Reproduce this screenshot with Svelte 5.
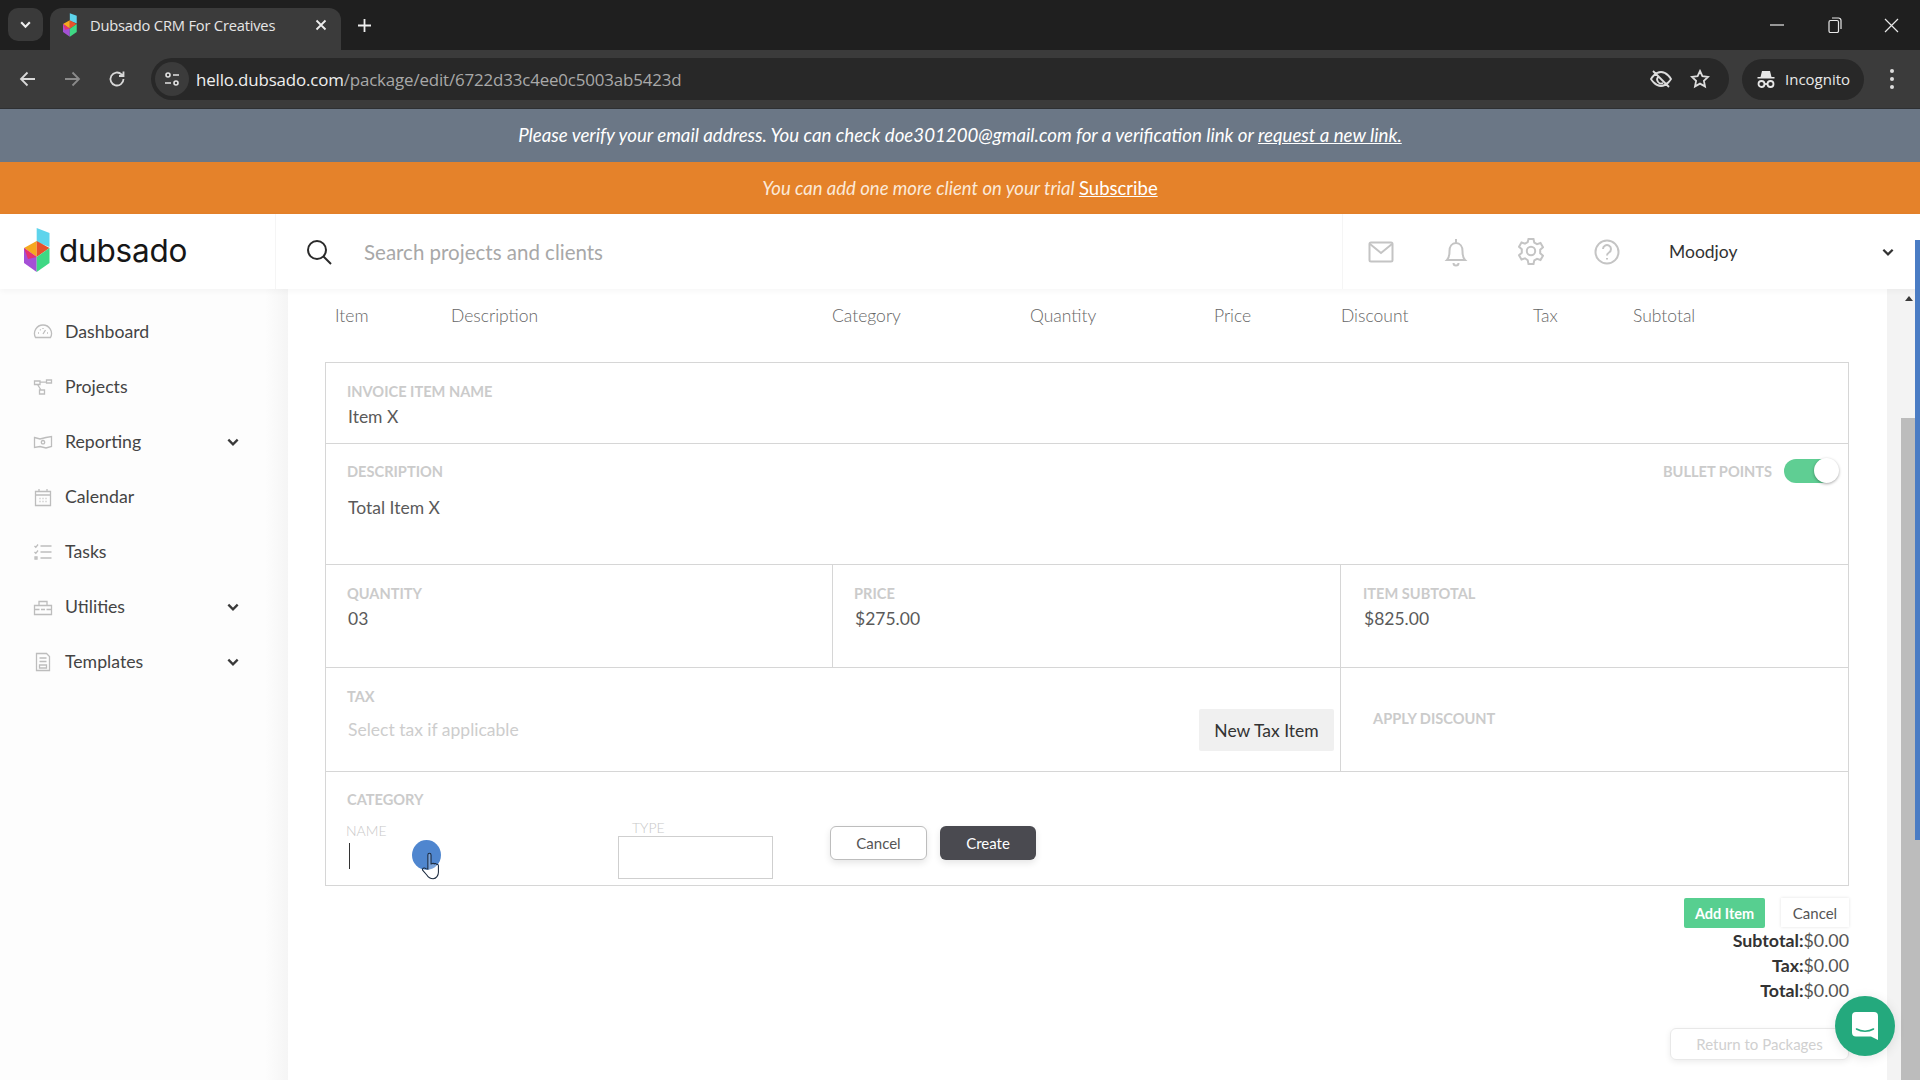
<script>
  const nav = [
    { label: 'Dashboard', icon: 'M2.5 15.5a8.5 8.5 0 1 1 15 0zM10 12l2.5-4M5 11h1M14 11h1M7 7.5l.7.7M10 6v1', more: false },
    { label: 'Projects', icon: 'M1.5 4h5.5v3.5H1.5zM13.5 3h5v3h-5zM6.5 13h5v4h-5zM7 5.2h6.5M4.5 7.5L8 13', more: false },
    { label: 'Reporting', icon: 'M1.5 5.5L7 7l6-1.5 5.5-1v10L13 16l-6-1.5-5.5 1zM10 8.5a1.7 1.7 0 1 0 .01 0z', more: true },
    { label: 'Calendar', icon: 'M2.5 4.5h15v14h-15zM2.5 8h15M6 2v3M14 2v3M6.5 11.5h1M9.5 11.5h1M12.5 11.5h1M6.5 14.5h1M9.5 14.5h1M12.5 14.5h1', more: false },
    { label: 'Tasks', icon: 'M7.5 4h11M7.5 10h11M7.5 16h11M1.5 4l1.3 1.3L5 2.5M1.5 10l1.3 1.3L5 8.5M2 15h2v2H2z', more: false },
    { label: 'Utilities', icon: 'M1.5 8.5h17v9h-17zM6 8.5V4.5h8v4M1.5 12.5h5M13.5 12.5h5M8 12.5h4', more: true },
    { label: 'Templates', icon: 'M3.5 1.5h10l3 3v14h-13zM6.5 6h7M6.5 9.5h7M6.5 13h7v3h-7z', more: true }
  ];
  const columns = ['Item', 'Description', 'Category', 'Quantity', 'Price', 'Discount', 'Tax', 'Subtotal'];
  const amounts = [
    { label: 'QUANTITY', value: '03' },
    { label: 'PRICE', value: '$275.00' },
    { label: 'ITEM SUBTOTAL', value: '$825.00' }
  ];
  const totals = ['Subtotal', 'Tax', 'Total'];
</script>

{#snippet cube()}
  <polygon points="12.7,0 25.5,5 25.5,19 12.7,14" fill="#5ed4ec" />
  <polygon points="0,20 12.7,13 12.7,29" fill="#f6a81f" />
  <polygon points="25.5,20 12.7,13 12.7,29" fill="#e8502c" />
  <polygon points="0,20 12.7,29 12.7,44 0,35" fill="#a550d6" />
  <polygon points="0,20 12.7,29 4,31" fill="#e6316f" />
  <polygon points="25.5,20 12.7,29 12.7,44 25.5,35" fill="#3fd884" />
{/snippet}

{#snippet down(w)}
  <svg class="chev" width={w} height={w} viewBox="0 0 12 12" aria-hidden="true"><path d="M2 4l4 4 4-4" /></svg>
{/snippet}

<div class="page">
  <div class="tabstrip">
    <button class="tablist">{@render down(13)}</button>
    <div class="tab">
      <svg class="favicon" width="14" height="24" viewBox="0 0 26 44" aria-hidden="true">{@render cube()}</svg>
      <span class="tabtitle">Dubsado CRM For Creatives</span>
      <svg class="tabx" width="12" height="12" viewBox="0 0 12 12" aria-hidden="true"><path d="M1.5 1.5l9 9M10.5 1.5l-9 9" /></svg>
    </div>
    <svg class="plus" width="15" height="15" viewBox="0 0 15 15" aria-hidden="true"><path d="M7.5 1v13M1 7.5h13" /></svg>
    <div class="winctl">
      <svg class="winmin" width="14" height="14" viewBox="0 0 14 14" aria-hidden="true"><path d="M0 7h14" /></svg>
      <svg width="14" height="16" viewBox="0 0 14 16" aria-hidden="true"><rect x="1" y="3.5" width="9.5" height="12" rx="1.5" /><path d="M4 1h6.5A2.5 2.5 0 0 1 13 3.5V12" /></svg>
      <svg width="15" height="15" viewBox="0 0 15 15" aria-hidden="true"><path d="M1 1l13 13M14 1L1 14" /></svg>
    </div>
  </div>

  <div class="toolbar">
    <svg class="navicon" width="18" height="18" viewBox="0 0 18 18" aria-hidden="true"><path d="M16 9H2.5M8.5 2.5L2 9l6.5 6.5" /></svg>
    <svg class="navicon dim" width="18" height="18" viewBox="0 0 18 18" aria-hidden="true"><path d="M2 9h13.5M9.5 2.5L16 9l-6.5 6.5" /></svg>
    <svg class="navicon reload" width="18" height="18" viewBox="0 0 18 18" aria-hidden="true"><path d="M15.5 9a6.5 6.5 0 1 1-2-4.7L15.5 6M15.5 1.5V6H11" /></svg>
    <div class="omnibox">
      <span class="siteicon">
        <svg width="16" height="16" viewBox="0 0 16 16" aria-hidden="true"><circle cx="4" cy="4" r="2" /><path d="M9 4h6M1 12h6" /><circle cx="12" cy="12" r="2" /></svg>
      </span>
      <span class="url"><span class="host">hello.dubsado.com</span>/package/edit/6722d33c4ee0c5003ab5423d</span>
      <svg class="omni-eye" width="24" height="22" viewBox="0 0 24 22" aria-hidden="true"><path d="M2 11s4-7 10-7 10 7 10 7-4 7-10 7-10-7-10-7zM4 3l16 16M9 9a4 4 0 0 0 5 6" /></svg>
      <svg class="omni-star" width="20" height="20" viewBox="0 0 20 20" aria-hidden="true"><path d="M10 2l2.4 5.2 5.6.7-4.1 3.9 1.1 5.6-5-2.8-5 2.8 1.1-5.6L2 7.9l5.6-.7z" /></svg>
    </div>
    <div class="incognito">
      <svg width="20" height="20" viewBox="0 0 20 20" aria-hidden="true"><path class="solid" d="M6 2h8l1.500 6h3v1.500h-17V8h3z" /><circle cx="5.500" cy="15" r="3" /><circle cx="14.500" cy="15" r="3" /><path d="M8.500 15h3" /></svg>
      <span>Incognito</span>
    </div>
    <span class="kebab"><i></i><i></i><i></i></span>
  </div>

  <div class="verify">Please verify your email address. You can check doe301200@gmail.com for a verification link or <u>request a new link.</u></div>
  <div class="trial">You can add one more client on your trial <u>Subscribe</u></div>

  <header class="topbar">
    <div class="brand">
      <svg width="26" height="44" viewBox="0 0 26 44" aria-hidden="true">{@render cube()}</svg>
      <span class="wordmark">dubsado</span>
    </div>
    <div class="search">
      <svg width="28" height="28" viewBox="0 0 28 28" aria-hidden="true"><circle cx="12" cy="12" r="9" /><path d="M18.5 18.5L26 26" /></svg>
      <span>Search projects and clients</span>
    </div>
    <div class="tools">
      <svg width="26" height="22" viewBox="0 0 26 22" aria-hidden="true"><rect x="1.5" y="1.5" width="23" height="19" rx="1.5" /><path d="M2 3l11 9 11-9" /></svg>
      <svg width="24" height="30" viewBox="0 0 24 30" aria-hidden="true"><path d="M3 23c2-2 2.5-5 2.5-9 0-4.5 2.5-8 6.500-8s6.500 3.500 6.500 8c0 4 .5 7 2.500 9zM12 2v4M9.500 26a2.500 2.500 0 0 0 5 0" /></svg>
      <svg width="26" height="30" viewBox="0 0 26 30" aria-hidden="true"><path d="M10.500 2h5l.8 3.700 2.700 1.500 3.500-1.200 2.500 4.300-2.800 2.500v3.400l2.800 2.500-2.500 4.300-3.500-1.200-2.700 1.500-.8 3.700h-5l-.8-3.700L7 21.300 3.500 22.500 1 18.200l2.800-2.500v-3.400L1 9.800l2.500-4.300L7 6.700l2.700-1.500z" /><circle cx="13" cy="14" r="4.200" /></svg>
      <svg width="26" height="26" viewBox="0 0 26 26" aria-hidden="true"><circle cx="13" cy="13" r="11.500" /><path d="M9 10a4 4 0 1 1 6 3.500c-1.400.8-2 1.500-2 3" /><path d="M13 19v1.500" /></svg>
    </div>
    <div class="account">
      <span>Moodjoy</span>
      {@render down(14)}
    </div>
  </header>

  <div class="workspace">
    <nav class="sidebar">
      {#each nav as item}
        <div class="navrow">
          <svg class="navglyph" width="20" height="20" viewBox="0 0 20 20" aria-hidden="true"><path d={item.icon} /></svg>
          <span class="navlabel">{item.label}</span>
          {#if item.more}{@render down(14)}{/if}
        </div>
      {/each}
    </nav>

    <main class="content">
      <div class="columns">
        {#each columns as col}<span>{col}</span>{/each}
      </div>

      <section class="form">
        <div class="row name">
          <span class="caps">INVOICE ITEM NAME</span>
          <div class="value">Item X</div>
        </div>
        <div class="row desc">
          <div class="descHead">
            <span class="caps">DESCRIPTION</span>
            <div class="bullets">
              <span class="caps">BULLET POINTS</span>
              <span class="toggle"><span class="knob"></span></span>
            </div>
          </div>
          <div class="value">Total Item X</div>
        </div>
        <div class="row amounts">
          {#each amounts as a}
            <div class="cell">
              <span class="caps">{a.label}</span>
              <div class="value">{a.value}</div>
            </div>
          {/each}
        </div>
        <div class="row taxes">
          <div class="cell taxcell">
            <div>
              <span class="caps">TAX</span>
              <div class="value ghost">Select tax if applicable</div>
            </div>
            <span class="newtax">New Tax Item</span>
          </div>
          <div class="cell discount"><span class="caps">APPLY DISCOUNT</span></div>
        </div>
        <div class="row category">
          <span class="caps">CATEGORY</span>
          <div class="catline">
            <div class="catname">
              <span class="thin">NAME</span>
              <span class="caret"></span>
            </div>
            <div class="cattype">
              <span class="thin">TYPE</span>
              <span class="typebox"></span>
            </div>
            <div class="catbtns">
              <span class="btn outline">Cancel</span>
              <span class="btn dark">Create</span>
            </div>
          </div>
        </div>
      </section>

      <div class="actions">
        <span class="add">Add Item</span>
        <span class="cancel">Cancel</span>
      </div>
      <div class="totals">
        {#each totals as t}
          <div><b>{t}:</b>$0.00</div>
        {/each}
      </div>
      <div class="returnrow"><span class="return">Return to Packages</span></div>
    </main>

    <div class="gutter">
      <div class="track"><span class="up"></span></div>
      <div class="thumb"></div>
    </div>
  </div>

  <span class="recbar"></span>

  <span class="pointer">
    <svg width="19" height="28" viewBox="0 0 18 26" aria-hidden="true"><path d="M6.5 16V2.5a1.5 1.5 0 0 1 3 0V11l1-.2a1.3 1.3 0 0 1 2 .2 1.3 1.3 0 0 1 2 .3c1-.2 2 .3 2 1.5V19c0 3-2 6-5 6-3.5 0-4.5-1-6-3.5L1.5 17c-.8-1.4 1.5-3 3-1.500z" /></svg>
  </span>

  <button class="chat" aria-label="Open chat">
    <svg width="26" height="28" viewBox="0 0 26 28" aria-hidden="true"><path class="bubble" d="M4 0h18a4 4 0 0 1 4 4v24l-7-3.5H4a4 4 0 0 1-4-4V4a4 4 0 0 1 4-4z" /><path class="smile" d="M4.5 17c5 3 12 3 17 0" /></svg>
  </button>
</div>

<style>
  :global(body) { margin: 0; background: #fff; }
  .page {
    position: relative;
    width: 1920px;
    height: 1080px;
    overflow: hidden;
    display: flex;
    flex-direction: column;
    font-family: Lato, "Liberation Sans", sans-serif;
    color: #555;
  }
  svg { display: block; flex: none; }
  button { border: 0; padding: 0; font: inherit; }

  /* browser chrome */
  .tabstrip {
    height: 50px;
    flex: none;
    background: #1f1f1f;
    display: flex;
    align-items: flex-end;
    padding-left: 8px;
    box-sizing: border-box;
    font-family: "Open Sans", "Noto Sans", sans-serif;
  }
  .tablist {
    width: 35px;
    height: 33px;
    margin-bottom: 9px;
    border-radius: 10px;
    background: #3a3a3a;
    display: flex;
    align-items: center;
    justify-content: center;
  }
  .tablist .chev path { stroke: #eee; stroke-width: 2; }
  .tab {
    width: 291px;
    height: 42px;
    margin-left: 7px;
    box-sizing: border-box;
    padding: 0 14px 8px 13px;
    background: #3b3b3b;
    border-radius: 12px 12px 0 0;
    display: flex;
    align-items: center;
    color: #e6e6e6;
    font-size: 14.7px;
    letter-spacing: -0.2px;
  }
  .tabtitle { margin-left: 13px; white-space: nowrap; flex: 1; }
  .tabx path { stroke: #eee; stroke-width: 1.8; fill: none; }
  .plus { margin: 0 0 17px 16px; }
  .plus path { stroke: #eee; stroke-width: 1.8; fill: none; }
  .winctl {
    margin-left: auto;
    height: 50px;
    display: flex;
    align-items: center;
    gap: 42px;
    padding-right: 21px;
  }
  .winmin { margin-right: 2px; }
  .winctl svg * { stroke: #e8e8e8; stroke-width: 1.2; fill: none; }

  .toolbar {
    height: 59px;
    flex: none;
    background: #3b3b3b;
    border-bottom: 1px solid #2e3033;
    box-sizing: border-box;
    display: flex;
    align-items: center;
    padding-left: 19px;
    gap: 26px;
    font-family: "Open Sans", "Noto Sans", sans-serif;
  }
  .navicon path { stroke: #d8d8d8; stroke-width: 1.8; fill: none; }
  .navicon.dim path { stroke: #8a8a8a; }
  .reload { margin: 0 -1px 0 1px; }
  .omnibox {
    width: 1578px;
    height: 42px;
    border-radius: 21px;
    background: #282828;
    display: flex;
    align-items: center;
    box-sizing: border-box;
    padding-left: 4px;
    color: #a9a9a9;
    font-size: 16.9px;
  }
  .siteicon {
    width: 34px;
    height: 34px;
    border-radius: 50%;
    background: #3b3b3b;
    display: flex;
    align-items: center;
    justify-content: center;
  }
  .siteicon * { stroke: #e2e2e2; stroke-width: 1.6; fill: none; }
  .url { margin-left: 7px; flex: 1; white-space: nowrap; letter-spacing: -0.15px; }
  .host { color: #efefef; }
  .omni-eye { margin-right: 17px; }
  .omni-eye path { stroke: #ddd; stroke-width: 1.8; fill: none; }
  .omni-star { margin-right: 19px; }
  .omni-star path { stroke: #ddd; stroke-width: 1.8; fill: none; }
  .incognito {
    width: 122px;
    height: 41px;
    margin-left: -13px;
    border-radius: 21px;
    background: #282828;
    display: flex;
    align-items: center;
    gap: 9px;
    padding-left: 14px;
    box-sizing: border-box;
    color: #e8e8e8;
    font-size: 15px;
  }
  .incognito svg * { stroke: #e8e8e8; stroke-width: 1.8; fill: none; }
  .incognito svg .solid { fill: #e8e8e8; stroke-width: 0; }
  .kebab { display: flex; flex-direction: column; gap: 4px; }
  .kebab i { width: 4px; height: 4px; border-radius: 50%; background: #ddd; display: block; }

  /* banners */
  .verify {
    height: 53px;
    flex: none;
    box-sizing: border-box;
    padding-bottom: 2px;
    background: #6b7786;
    color: #fff;
    font-style: italic;
    font-size: 18.7px;
    display: flex;
    align-items: center;
    justify-content: center;
    white-space: pre-wrap;
  }
  .trial {
    height: 52px;
    flex: none;
    background: #e5822a;
    color: #fbe9d8;
    font-style: italic;
    font-size: 18.5px;
    display: flex;
    align-items: center;
    justify-content: center;
    white-space: pre-wrap;
  }
  .trial u { font-style: normal; color: #fff; }

  /* top bar */
  .topbar {
    height: 75px;
    flex: none;
    background: #fff;
    display: flex;
    align-items: center;
    position: relative;
    z-index: 2;
    box-shadow: 0 2px 6px rgba(0, 0, 0, 0.04);
    padding-right: 25px;
    box-sizing: border-box;
  }
  .brand {
    width: 276px;
    height: 100%;
    box-sizing: border-box;
    display: flex;
    align-items: center;
    padding: 0 0 3px 24px;
    border-right: 1px solid #f5f5f5;
    flex: none;
  }
  .wordmark {
    font-family: Inter, "Open Sans", sans-serif;
    font-size: 31.5px;
    color: #161616;
    margin-left: 9px;
    letter-spacing: -0.2px;
  }
  .search {
    width: 1067px;
    height: 100%;
    box-sizing: border-box;
    border-right: 1px solid #f5f5f5;
    display: flex;
    align-items: center;
    padding-left: 29px;
    gap: 31px;
    color: #a8a8a8;
    font-size: 20.5px;
    flex: none;
  }
  .search svg * { stroke: #2a2a2a; stroke-width: 2; fill: none; }
  .tools {
    display: flex;
    align-items: center;
    gap: 50px;
    margin-left: 25px;
  }
  .tools svg * { stroke: #c4c4c4; stroke-width: 2; fill: none; }
  .account {
    flex: 1;
    margin-left: 49px;
    display: flex;
    align-items: center;
    justify-content: space-between;
    font-size: 17.5px;
    color: #333;
  }
  .chev path { stroke: #333; stroke-width: 1.9; fill: none; }

  /* body */
  .workspace { flex: 1; min-height: 0; display: flex; }
  .sidebar {
    width: 288px;
    flex: none;
    box-sizing: border-box;
    padding: 15px 48px 0 33px;
    background: linear-gradient(90deg, #fdfdfd 92%, #f5f5f5 100%);
  }
  .navrow {
    height: 55px;
    display: flex;
    align-items: center;
    color: #444;
    font-size: 17.7px;
  }
  .navglyph path { stroke: #bdbdbd; stroke-width: 1.3; fill: none; }
  .navlabel { margin-left: 12px; flex: 1; }
  .navrow .chev path { stroke: #3a3a3a; stroke-width: 2; }

  .content {
    flex: 1;
    min-width: 0;
    background: #fff;
    box-sizing: border-box;
    padding: 0 38px 0 37px;
  }
  .columns {
    height: 73px;
    box-sizing: border-box;
    padding: 16px 0 0 10px;
    display: grid;
    grid-template-columns: 116px 381px 198px 184px 127px 192px 100px 1fr;
    font-size: 17.5px;
    font-weight: 300;
    color: #666;
  }
  .form { border: 1px solid #d6d6d6; border-bottom: 0; }
  .row { border-bottom: 1px solid #d6d6d6; box-sizing: border-box; }
  .caps {
    display: block;
    font-size: 14.6px;
    font-weight: 700;
    line-height: 18px;
    color: #cbcbcb;
  }
  .value {
    font-size: 17.5px;
    line-height: 22px;
    color: #5a5a5a;
    margin-left: 1px;
    font-weight: 400;
  }
  .name { height: 81px; padding: 20px 21px 0; }
  .name .value { margin-top: 5px; }
  .desc { height: 121px; padding: 17px 13px 0 21px; }
  .descHead { display: flex; justify-content: space-between; align-items: center; }
  .desc .value { margin-top: 14px; }
  .bullets { display: flex; align-items: center; gap: 12px; }
  .toggle {
    width: 51px;
    height: 24px;
    border-radius: 12px;
    background: #5fce93;
    position: relative;
    margin-top: -2px;
  }
  .knob {
    position: absolute;
    right: -4px;
    top: -1px;
    width: 25px;
    height: 25px;
    border-radius: 50%;
    background: #fff;
    box-shadow: 0 1px 3px rgba(0, 0, 0, 0.35);
  }
  .amounts { height: 103px; display: grid; grid-template-columns: 506px 508px 1fr; }
  .cell { padding: 20px 21px 0; box-sizing: border-box; }
  .amounts .cell + .cell { border-left: 1px solid #d6d6d6; }
  .amounts .cell:last-child { padding-left: 22px; }
  .amounts .value { margin-top: 5px; }
  .taxes { height: 104px; display: grid; grid-template-columns: 1014px 1fr; }
  .taxcell { display: flex; justify-content: space-between; padding-right: 6px; }
  .taxcell .value { margin-top: 13px; }
  .ghost { color: #cdcdcd; }
  .newtax {
    width: 135px;
    height: 42px;
    margin-top: 21px;
    background: #f0f0f0;
    border-radius: 2px;
    color: #333;
    font-size: 17.5px;
    display: flex;
    align-items: center;
    justify-content: center;
  }
  .discount { border-left: 1px solid #d6d6d6; padding: 42px 0 0 32px; }
  .category { height: 114px; padding: 19px 21px 0; position: relative; }
  .catline { display: flex; align-items: flex-start; }
  .thin { display: block; font-size: 14px; line-height: 16px; font-weight: 300; color: #c8c8c8; }
  .catname { width: 272px; margin-top: 14px; margin-left: -1px; }
  .caret { display: block; width: 1px; height: 26px; margin: 4px 0 0 3px; background: #333; }
  .cattype { margin-top: 11px; width: 212px; }
  .cattype .thin { margin-left: 14px; }
  .typebox { display: block; width: 155px; height: 43px; box-sizing: border-box; border: 1px solid #cfcfcf; }
  .catbtns { display: flex; gap: 13px; margin-top: 17px; }
  .btn {
    width: 97px;
    height: 34px;
    box-sizing: border-box;
    border-radius: 6px;
    display: flex;
    align-items: center;
    justify-content: center;
    font-size: 15px;
    box-shadow: 0 3px 7px rgba(0, 0, 0, 0.1);
  }
  .btn.outline { border: 1px solid #bdbdbd; color: #555; background: #fff; }
  .btn.dark { background: #4a4a50; color: #fff; width: 96px; }

  .actions {
    display: flex;
    justify-content: flex-end;
    align-items: flex-start;
    gap: 16px;
    margin-top: 12px;
    height: 30px;
  }
  .add {
    width: 81px;
    height: 30px;
    border-radius: 2px;
    background: #57cf90;
    color: #fff;
    font-weight: 700;
    font-size: 14.5px;
    display: flex;
    align-items: center;
    justify-content: center;
  }
  .cancel {
    width: 68px;
    height: 29px;
    background: #fff;
    box-shadow: 0 0 3px rgba(0, 0, 0, 0.12);
    color: #555;
    font-size: 15px;
    display: flex;
    align-items: center;
    justify-content: center;
  }
  .totals { text-align: right; font-size: 17.8px; line-height: 25px; color: #555; }
  .totals b { color: #333; font-weight: 700; }
  .returnrow { display: flex; justify-content: flex-end; margin-top: 25px; }
  .return {
    width: 179px;
    height: 32px;
    box-sizing: border-box;
    border: 1px solid #e8e8e8;
    border-radius: 6px;
    color: #d0d0d0;
    font-size: 15px;
    display: flex;
    align-items: center;
    justify-content: center;
    box-shadow: 0 2px 6px rgba(0, 0, 0, 0.08);
  }

  .gutter {
    width: 33px;
    flex: none;
    display: flex;
    flex-direction: column;
    background: #f3f3f3;
  }
  .track { height: 129px; flex: none; position: relative; }
  .up {
    position: absolute;
    left: 18px;
    top: 7px;
    border-left: 4px solid transparent;
    border-right: 4px solid transparent;
    border-bottom: 5px solid #3a3a3a;
  }
  .thumb { flex: 1; margin-left: 14px; background: #bcbcbc; }

  /* overlays */
  .recbar {
    position: absolute;
    right: 0;
    top: 240px;
    width: 5px;
    height: 600px;
    background: #4a7cc4;
    z-index: 3;
  }
  .pointer {
    position: absolute;
    left: 412px;
    top: 840px;
    width: 29px;
    height: 30px;
    border-radius: 50%;
    background: #4f86cf;
  }
  .pointer svg { position: absolute; left: 9px; top: 12px; }
  .pointer path { fill: rgba(255, 255, 255, 0.25); stroke: #1b2a3f; stroke-width: 1; }
  .chat {
    position: absolute;
    left: 1835px;
    top: 996px;
    width: 60px;
    height: 60px;
    border-radius: 50%;
    background: #24a97d;
    display: flex;
    align-items: center;
    justify-content: center;
    box-shadow: 0 2px 12px rgba(0, 0, 0, 0.1);
    z-index: 4;
  }
  .bubble { fill: #fff; }
  .smile { fill: none; stroke: #24a97d; stroke-width: 1.6; stroke-linecap: round; }
</style>
